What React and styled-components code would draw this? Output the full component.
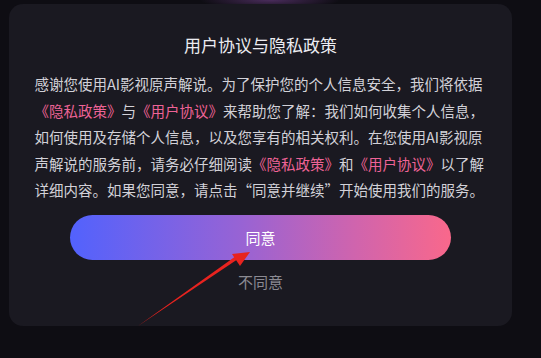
import React from "react";
import styled, { createGlobalStyle } from "styled-components";

const GlobalStyle = createGlobalStyle`
  html, body {
    margin: 0;
    padding: 0;
    background: #0e0d13;
  }
  body {
    font-family: "Noto Sans CJK SC", "Noto Sans", sans-serif;
  }
`;

const Page = styled.div`
  position: relative;
  width: 541px;
  height: 358px;
  overflow: hidden;
  padding: 4px 29px 0 9px;
  box-sizing: border-box;
  background:
    radial-gradient(ellipse 70px 9px at 270px 0px, #4a2c5c 0%, rgba(14, 13, 19, 0) 100%),
    #0e0d13;
`;

const Card = styled.div`
  width: 503px;
  height: 322px;
  box-sizing: border-box;
  background: #1a1921;
  border-radius: 14px;
  padding: 29px 25px 0 25px;
  display: flex;
  flex-direction: column;
  align-items: center;
`;

const Title = styled.h2`
  margin: 0;
  font-size: 17px;
  line-height: 24px;
  font-weight: 400;
  color: #ececf1;
`;

const Body = styled.p`
  margin: 14px 0 0;
  width: 452px;
  font-size: 14.5px;
  line-height: 26.5px;
  color: #d2d1d8;
  text-align: left;
`;

const Link = styled.span`
  color: #ee6396;
`;

const AgreeButton = styled.button`
  margin-top: 11px;
  width: 381px;
  height: 45px;
  border: none;
  border-radius: 23px;
  background: linear-gradient(90deg, #5262fd 0%, #9863d4 45%, #d064ad 75%, #f9688b 100%);
  color: #ffffff;
  font-family: inherit;
  font-size: 15px;
  cursor: pointer;
`;

const DeclineButton = styled.button`
  margin-top: 10px;
  border: none;
  background: none;
  color: #8b8a92;
  font-family: inherit;
  font-size: 15px;
  line-height: 24px;
  padding: 0;
  cursor: pointer;
`;

const Arrow = styled.svg`
  position: absolute;
  left: 0;
  top: 0;
  pointer-events: none;
`;

export default function App() {
  return (
    <>
      <GlobalStyle />
      <Page>
        <Card>
          <Title>用户协议与隐私政策</Title>
          <Body>
            感谢您使用AI影视原声解说。为了保护您的个人信息安全，我们将依据
            <Link>《隐私政策》</Link>与<Link>《用户协议》</Link>
            来帮助您了解：我们如何收集个人信息，如何使用及存储个人信息，以及您享有的相关权利。在您使用AI影视原声解说的服务前，请务必仔细阅读
            <Link>《隐私政策》</Link>和<Link>《用户协议》</Link>
            以了解详细内容。如果您同意，请点击“同意并继续”开始使用我们的服务。
          </Body>
          <AgreeButton>同意</AgreeButton>
          <DeclineButton>不同意</DeclineButton>
        </Card>
        <Arrow width="541" height="358" viewBox="0 0 541 358">
          <polygon points="138,326 238,259 236,256" fill="#e8231f" />
          <polygon points="250,252 232,254 240,266" fill="#e8231f" />
        </Arrow>
      </Page>
    </>
  );
}
